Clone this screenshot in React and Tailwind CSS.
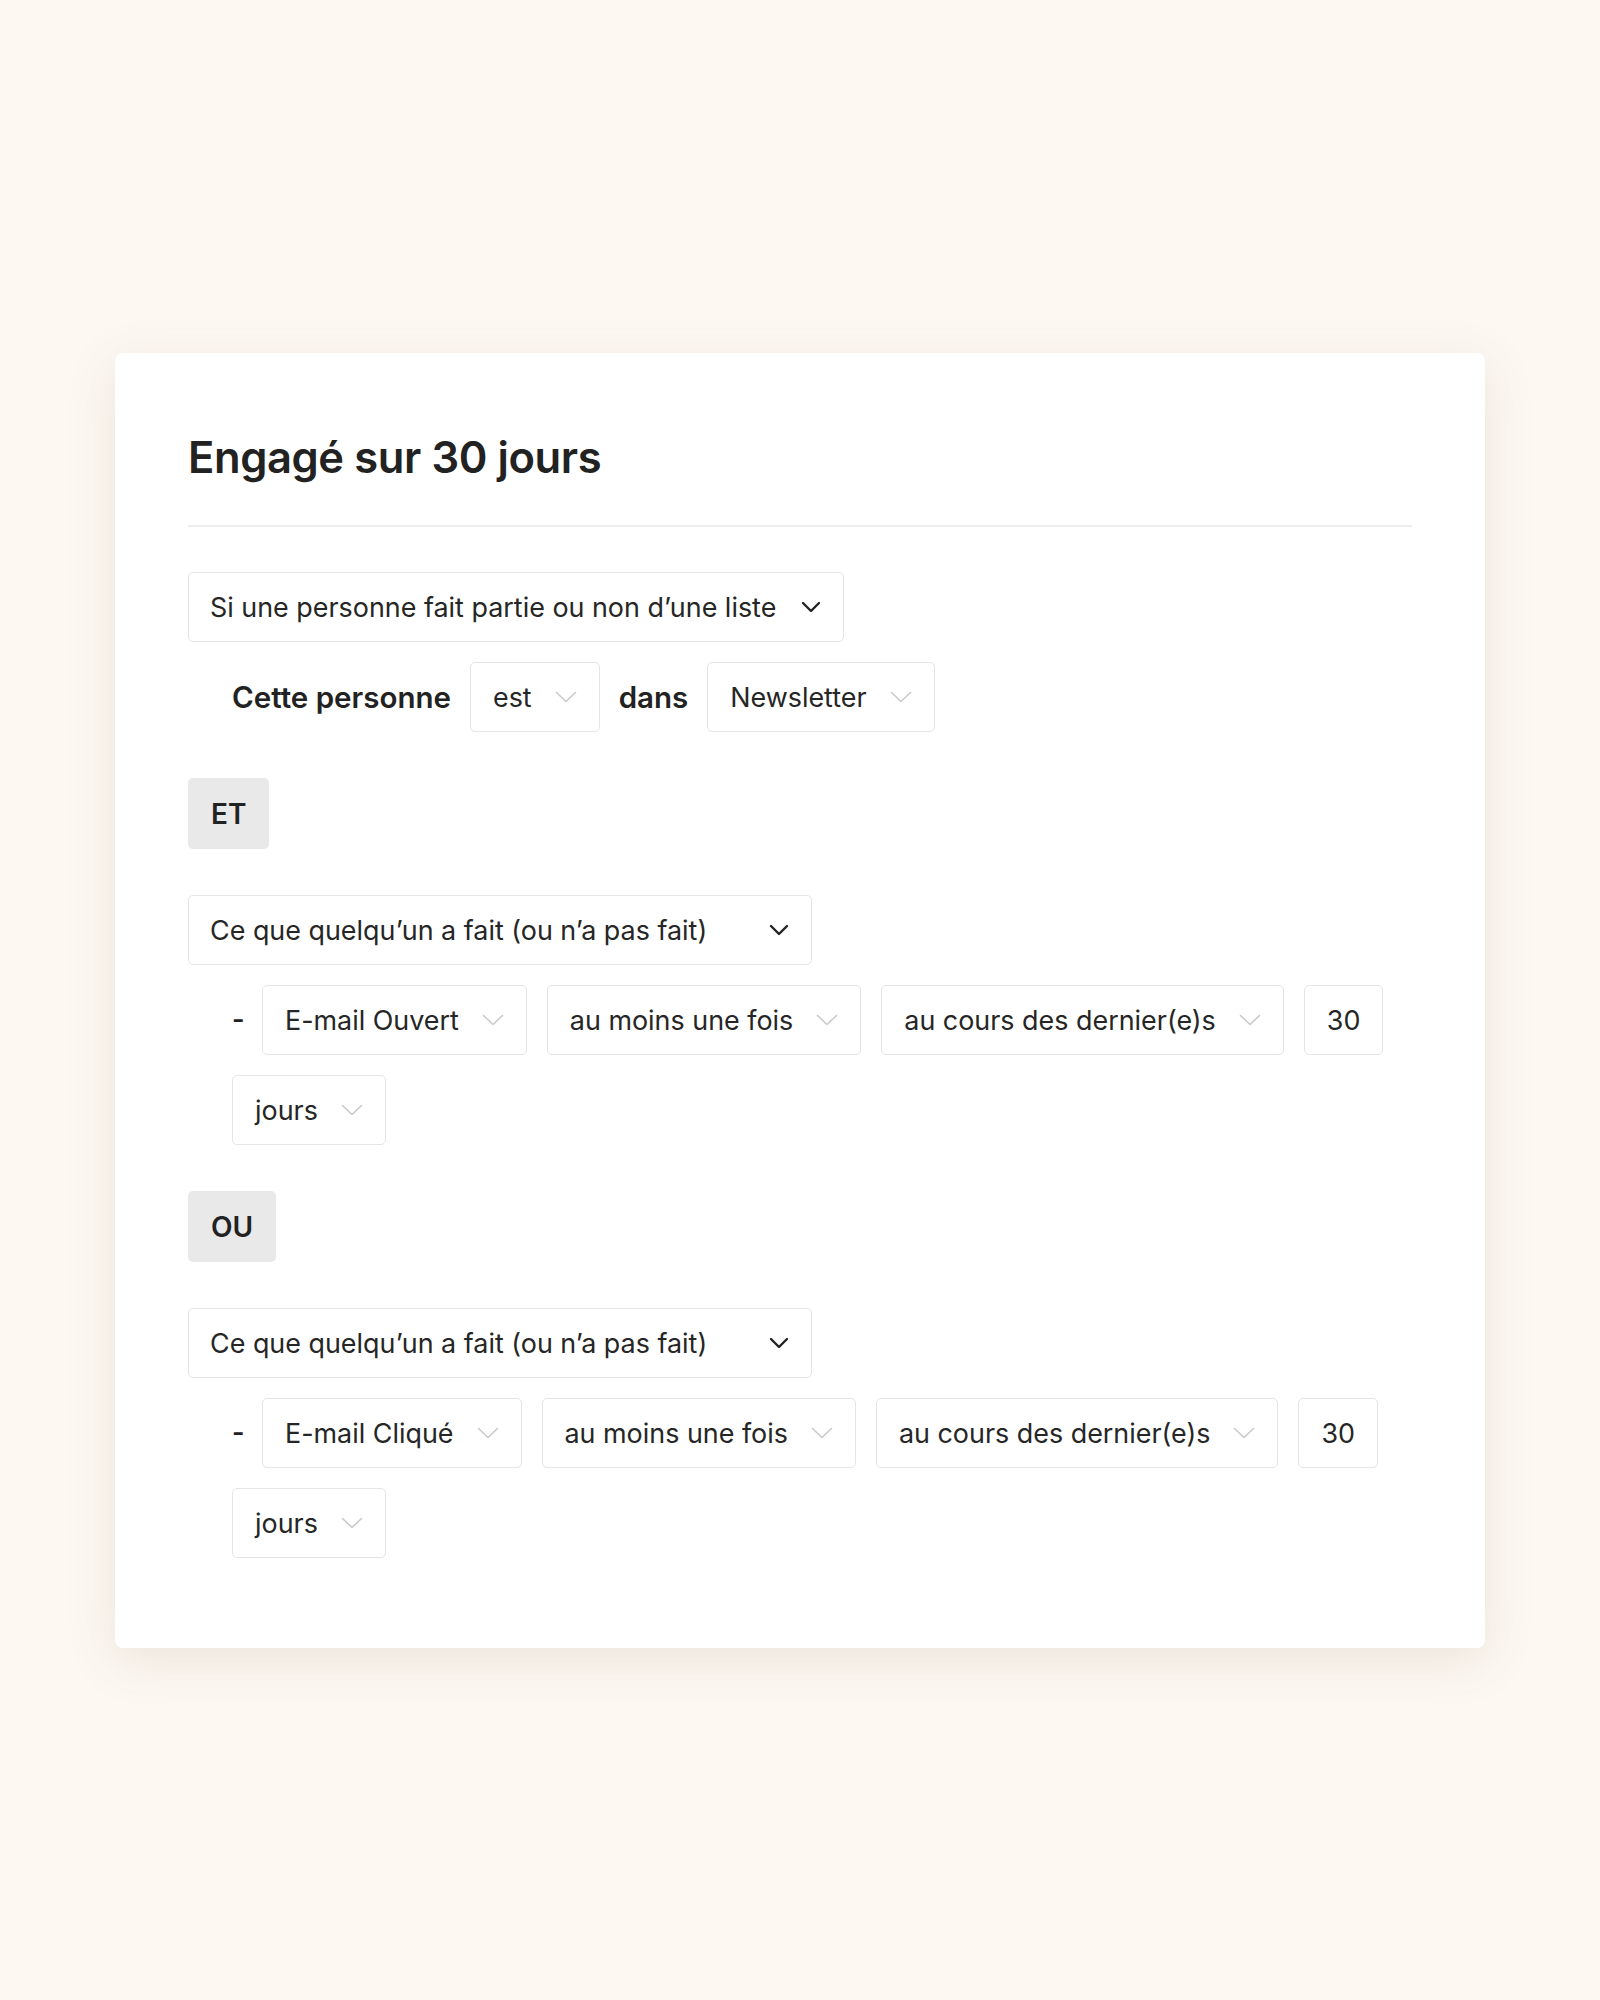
import React from "react";

function DarkChevron({ className = "" }) {
  return (
    <svg className={className} width="20" height="12" viewBox="0 0 20 12" fill="none">
      <path d="M2 2 L10 10 L18 2" stroke="#222222" strokeWidth="2.4" strokeLinecap="round" strokeLinejoin="round" />
    </svg>
  );
}

function LightChevron({ className = "" }) {
  return (
    <svg className={className} width="22" height="12" viewBox="0 0 22 12" fill="none">
      <path d="M1.5 1.5 L11 10.5 L20.5 1.5" stroke="#c9c9c9" strokeWidth="1.6" strokeLinecap="round" strokeLinejoin="round" />
    </svg>
  );
}

function MainSelect({ label, wide = false }) {
  return (
    <div
      className={
        "h-[70px] flex items-center pl-[21px] pr-[22px] border-[1.5px] border-[#e5e5e5] rounded-[5px] bg-white text-[26.9px] text-[#262626] " +
        (wide ? "w-[624px] justify-between" : "w-fit")
      }
    >
      <span>{label}</span>
      <DarkChevron className="ml-[25px] shrink-0" />
    </div>
  );
}

function Box({ label, chevron = true }) {
  return (
    <div className="h-[70px] flex items-center px-[22px] border-[1.5px] border-[#e5e5e5] rounded-[5px] bg-white text-[26.9px] text-[#262626] whitespace-nowrap">
      <span>{label}</span>
      {chevron && <LightChevron className="ml-[23px] shrink-0" />}
    </div>
  );
}

function Badge({ label }) {
  return (
    <div className="h-[71px] w-fit flex items-center px-[23px] rounded-[5px] bg-[#e9e9e9] text-[28px] font-semibold text-[#222]">
      {label}
    </div>
  );
}

function SubRow({ event }) {
  return (
    <div className="ml-[44px] mt-5 flex flex-wrap items-center gap-5">
      <span className="text-[27px] font-semibold text-[#222] w-[10px]">-</span>
      <Box label={event} />
      <Box label="au moins une fois" />
      <Box label="au cours des dernier(e)s" />
      <Box label="30" chevron={false} />
      <Box label="jours" />
    </div>
  );
}

export default function App() {
  return (
    <div className="min-h-[2000px] w-full bg-[#fdf8f2] pt-[353px] font-['Inter','Noto_Sans',sans-serif]">
      <div className="w-[1370px] mx-auto bg-white rounded-[8px] shadow-[0_12px_50px_rgba(110,90,60,0.13)] px-[73px] pt-[78px] pb-[90px]">
        <h1 className="text-[43.5px] leading-[52px] font-semibold text-[#222] tracking-[-0.4px] pb-[42px] border-b-2 border-[#ececec]">
          Engagé sur 30 jours
        </h1>

        <div className="mt-[45px]">
          <MainSelect label="Si une personne fait partie ou non d’une liste" />
        </div>

        <div className="ml-[44px] mt-5 flex items-center gap-[19px]">
          <span className="text-[29.5px] font-semibold text-[#222]">Cette personne</span>
          <Box label="est" />
          <span className="text-[29.5px] font-semibold text-[#222]">dans</span>
          <Box label="Newsletter" />
        </div>

        <div className="mt-[46px]">
          <Badge label="ET" />
        </div>

        <div className="mt-[46px]">
          <MainSelect label="Ce que quelqu’un a fait (ou n’a pas fait)" wide />
        </div>
        <SubRow event="E-mail Ouvert" />

        <div className="mt-[46px]">
          <Badge label="OU" />
        </div>

        <div className="mt-[46px]">
          <MainSelect label="Ce que quelqu’un a fait (ou n’a pas fait)" wide />
        </div>
        <SubRow event="E-mail Cliqué" />
      </div>
    </div>
  );
}
